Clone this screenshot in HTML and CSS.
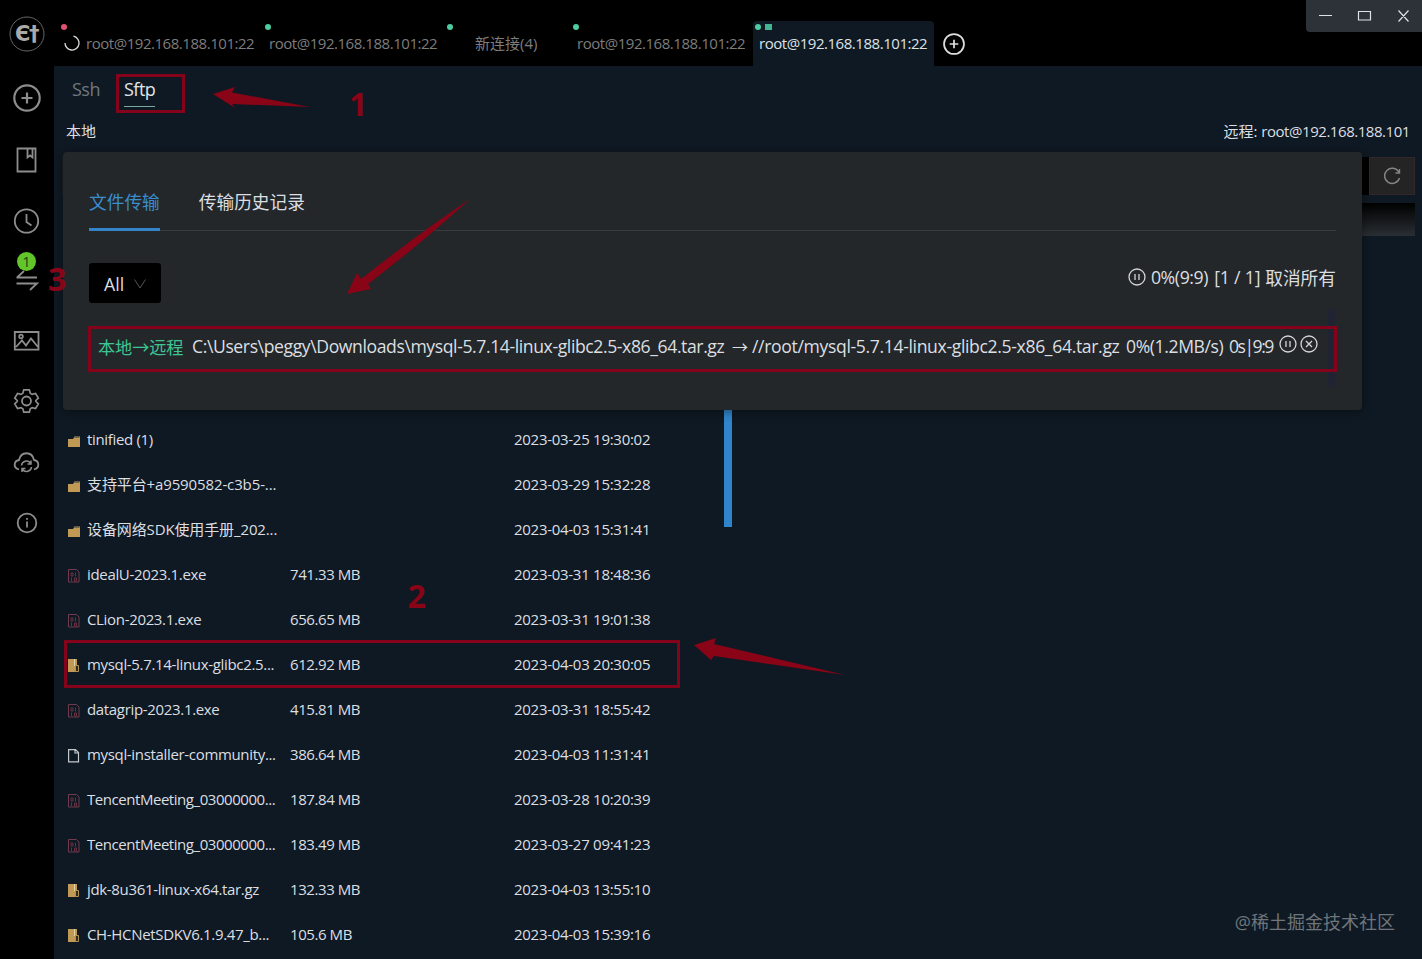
FILE: index.html
```html
<!DOCTYPE html>
<html lang="zh">
<head>
    <meta charset="UTF-8">
    <title>electerm</title>
    <link rel="stylesheet" href="styles.css">
</head>
<body>
<svg class="defs">
    <symbol id="folder" viewBox="0 0 12 12"><path d="M0 4h5l1.500-2.500H12V12H0z" fill="#c09a55"/><path d="M6.500 1h5v1.800H6z" fill="#5e5848"/></symbol>
    <symbol id="exe" viewBox="0 0 12 14"><path d="M.5.5h8l2.500 2.500v10H.5z" fill="none" stroke="#723a4c"/><path d="M3 4h2v3H3zM7.500 3.500v4M3.500 8.500v3.500M6.500 9h2v3h-2z" fill="none" stroke="#6a3143"/></symbol>
    <symbol id="zip" viewBox="0 0 12 14"><path d="M0 0h9v13H0z" fill="#c09a55"/><path d="M6.500 0v7" stroke="#e2d2aa"/><path d="M7.500 6.500h3v6h-3z" fill="#2c2a24" stroke="#b08f52"/></symbol>
    <symbol id="doc" viewBox="0 0 12 14"><path d="M.6.6h6.900l3 3v9.200H.6zM7 .6v3.400h3.500" fill="none" stroke="#c4c8cc" stroke-width="1.200"/></symbol>
    <symbol id="pause" viewBox="0 0 18 18"><circle cx="9" cy="9" r="8"/><path d="M7 6v6M11 6v6"/></symbol>
    <symbol id="plus" viewBox="0 0 28 28"><circle cx="14" cy="14" r="12.700"/><path d="M14 8.500v11M8.500 14h11"/></symbol>
</svg>

<div class="app">
    <div class="sidebar">
        <svg class="logo" viewBox="0 0 36 36"><circle cx="18" cy="18" r="17"/><text x="6" y="25">Є†</text></svg>
        <svg class="icon add" viewBox="0 0 28 28"><use href="#plus"/></svg>
        <svg class="icon book" viewBox="0 0 28 28"><path d="M4.500 2.500h18v23h-18zM14.500 2.500v9l2.500-2 2.500 2v-9"/></svg>
        <svg class="icon clock" viewBox="0 0 28 28"><circle cx="13.500" cy="14" r="11.700"/><path d="M13.500 7v8l5 3.500"/></svg>
        <div class="transfer"><svg class="icon" viewBox="0 0 28 28"><path d="M3.500 12.500h20.500M4 12.500L11 6M3.500 18.500H24L17 25"/></svg><span class="badge">1</span></div>
        <svg class="icon picture" viewBox="0 0 28 28"><path d="M1.800 5h23.700v17.700H1.800zM3 20l6-6.500 4 5 5-7 7 8.500"/><circle cx="8" cy="9.500" r="1.800"/></svg>
        <svg class="icon gear" viewBox="0 0 28 28"><path d="M10.500 2.500h6l1 3.700 2 1.200 3.700-1 3 5-2.700 2.600v1l2.700 2.600-3 5-3.700-1-2 1.200-1 3.700h-6l-1-3.700-2-1.200-3.700 1-3-5L3.500 15v-1L.8 11.400l3-5 3.700 1 2-1.200z" transform="translate(1 .5) scale(.93)"/><circle cx="13.500" cy="14" r="4.500"/></svg>
        <svg class="icon cloud" viewBox="0 0 28 28"><path d="M6 21.500C0 20 .500 13 6 12 8 3 19 3 21 12c5.500 1 6 8 0 9.500"/><path d="M8.500 17.500a5 5 0 0 1 9-2.500M18 12.500V16h-3.500M18.500 19a5 5 0 0 1-9 2.500M9 24v-3.500h3.500" stroke-width="1.500"/></svg>
        <svg class="icon info" viewBox="0 0 28 28"><circle cx="14" cy="14" r="9.300"/><path d="M14 12.500v6M14 9v1.800"/></svg>
    </div>

    <div class="main">
        <div class="tabs">
            <div class="tab t1"><i class="dot red"></i><svg class="spin" viewBox="0 0 16 16"><path d="M9.500 1.200A7 7 0 1 1 1 8"/></svg><span>root@192.168.188.101:22</span></div>
            <div class="tab t2"><i class="dot"></i><span>root@192.168.188.101:22</span></div>
            <div class="tab t3"><i class="dot"></i><span>新连接(4)</span></div>
            <div class="tab t4"><i class="dot"></i><span>root@192.168.188.101:22</span></div>
            <div class="tab t5 active"><i class="dot"></i><i class="square"></i><span>root@192.168.188.101:22</span></div>
            <svg class="new-tab" viewBox="0 0 28 28"><use href="#plus"/></svg>
            <div class="window-control">
                <svg viewBox="0 0 116 32"><path d="M13 15.500h13M52.500 11.500h12v8.500h-12zM92.500 10.500l10 11M102.500 10.500l-10 11"/></svg>
            </div>
        </div>

        <div class="session">
            <div class="pane-tabs"><span class="ssh">Ssh</span><span class="sftp">Sftp</span></div>
            <div class="titles"><span>本地</span><span>远程: <b>root@192.168.188.101</b></span></div>
            <div class="address">
                <div class="path"></div>
                <div class="reload"><svg viewBox="0 0 18 18"><path d="M15.800 5A7.600 7.600 0 1 0 16.500 11M16.500 2v4h-4"/></svg></div>
            </div>
            <div class="list-header"></div>
            <div class="files">
                <div class="list">
                    <div class="row"><svg><use href="#folder"/></svg><span class="name">tinified (1)</span><span class="size"></span><span class="date">2023-03-25 19:30:02</span></div>
                    <div class="row"><svg><use href="#folder"/></svg><span class="name cn">支持平台+a9590582-c3b5-...</span><span class="size"></span><span class="date">2023-03-29 15:32:28</span></div>
                    <div class="row"><svg><use href="#folder"/></svg><span class="name cn">设备网络SDK使用手册_202...</span><span class="size"></span><span class="date">2023-04-03 15:31:41</span></div>
                    <div class="row"><svg><use href="#exe"/></svg><span class="name">idealU-2023.1.exe</span><span class="size">741.33 MB</span><span class="date">2023-03-31 18:48:36</span></div>
                    <div class="row"><svg><use href="#exe"/></svg><span class="name">CLion-2023.1.exe</span><span class="size">656.65 MB</span><span class="date">2023-03-31 19:01:38</span></div>
                    <div class="row"><svg><use href="#zip"/></svg><span class="name">mysql-5.7.14-linux-glibc2.5...</span><span class="size">612.92 MB</span><span class="date">2023-04-03 20:30:05</span></div>
                    <div class="row"><svg><use href="#exe"/></svg><span class="name">datagrip-2023.1.exe</span><span class="size">415.81 MB</span><span class="date">2023-03-31 18:55:42</span></div>
                    <div class="row"><svg><use href="#doc"/></svg><span class="name">mysql-installer-community...</span><span class="size">386.64 MB</span><span class="date">2023-04-03 11:31:41</span></div>
                    <div class="row"><svg><use href="#exe"/></svg><span class="name wide">TencentMeeting_03000000...</span><span class="size">187.84 MB</span><span class="date">2023-03-28 10:20:39</span></div>
                    <div class="row"><svg><use href="#exe"/></svg><span class="name wide">TencentMeeting_03000000...</span><span class="size">183.49 MB</span><span class="date">2023-03-27 09:41:23</span></div>
                    <div class="row"><svg><use href="#zip"/></svg><span class="name">jdk-8u361-linux-x64.tar.gz</span><span class="size">132.33 MB</span><span class="date">2023-04-03 13:55:10</span></div>
                    <div class="row"><svg><use href="#zip"/></svg><span class="name">CH-HCNetSDKV6.1.9.47_b...</span><span class="size">105.6 MB</span><span class="date">2023-04-03 15:39:16</span></div>
                </div>
                <div class="scrollbar"></div>
            </div>
        </div>
    </div>
</div>

<div class="popup">
    <div class="popup-tabs"><span class="current">文件传输</span><span>传输历史记录</span></div>
    <div class="tools">
        <div class="select"><span>All</span><svg viewBox="0 0 12 12"><path d="M.5 1.500L6 10l5.500-8.500"/></svg></div>
        <div class="summary"><svg class="ctl"><use href="#pause"/></svg><span class="percent">0%(9:9)</span><span class="count">[1 / 1]</span><span>取消所有</span></div>
    </div>
    <div class="transfers">
        <span class="direction">本地→远程</span>
        <span class="from">C:\Users\peggy\Downloads\mysql-5.7.14-linux-glibc2.5-x86_64.tar.gz</span>
        <span class="arrow">→</span>
        <span class="to">//root/mysql-5.7.14-linux-glibc2.5-x86_64.tar.gz</span>
        <span class="speed">0%(1.2MB/s)</span>
        <span class="time">0s|9:9</span>
        <svg class="ctl"><use href="#pause"/></svg>
        <svg class="ctl" viewBox="0 0 18 18"><circle cx="9" cy="9" r="8"/><path d="M6 6l6 6M12 6l-6 6"/></svg>
        <div class="track"></div>
    </div>
</div>

<svg class="marks" viewBox="0 0 1422 959">
    <g class="boxes">
        <path d="M117.500 75.500h66v36h-66zM89.500 327.500h1246v43h-1246zM65.500 641.500h613v45h-613z"/>
    </g>
    <path d="M213 94l22-7-3 5.500 78 14.500-78-3 3 4z"/>
    <path d="M347 294l10-21 4 6q57-45 109-80-47 43-102 85l3 5z"/>
    <path d="M694 645l22-7-2 6 131 31-131-19-3 4z"/>
    <text x="349" y="116">1</text>
    <text x="407.500" y="608">2</text>
    <text x="48" y="291">3</text>
</svg>
<div class="watermark">@稀土掘金技术社区</div>
</body>
</html>
```
FILE: styles.css
```css
body {margin: 0; background: #000; color: #dcdfe2; font-family: "Open Sans", "Noto Sans CJK SC", sans-serif; font-size: 15px; overflow: hidden;}
span, b {white-space: nowrap; font-weight: normal;}
svg {fill: none; flex: none;}
.defs {display: none;}
.app {display: flex; width: 1422px; height: 959px; overflow: hidden;}

/* sidebar */
.sidebar {width: 54px; flex: none; display: flex; flex-direction: column; align-items: center; padding-top: 16px; box-sizing: border-box;}
.logo {width: 36px; height: 36px; stroke: #666;}
.logo text {fill: #aaa; stroke: none; font: bold 21px "DejaVu Sans", sans-serif; letter-spacing: -1.5px;}
.icon {width: 28px; height: 28px; stroke: #8d8d8d; stroke-width: 1.8; display: block;}
.add {margin-top: 32px; stroke-width: 2.2;}
.book {margin-top: 34px;}
.clock {margin-top: 33px;}
.transfer {position: relative; margin-top: 30px;}
.badge {position: absolute; left: 4px; top: -13px; width: 19px; height: 19px; border-radius: 50%; background: #62c62b; color: #173b10; font-size: 14px; line-height: 19px; text-align: center;}
.picture {margin-top: 34px;}
.gear {margin-top: 32px;}
.cloud {margin-top: 33px;}
.info {margin-top: 33px;}

/* top tabs */
.main {flex: 1; min-width: 0;}
.tabs {display: flex; height: 66px; box-sizing: border-box; padding-top: 21px; color: #7d7d7d; position: relative;}
.tab {position: relative; height: 45px; line-height: 45px; box-sizing: border-box; padding-left: 6px; border-radius: 4px 4px 0 0; letter-spacing: -.46px;}
.t1 {width: 204px; margin-left: 8px; display: flex; padding-left: 2px;}
.t2 {width: 182px; margin-left: -3px;}
.t3 {width: 126px; padding-left: 30px; letter-spacing: 0;}
.t4 {width: 182px;}
.t5 {width: 181px;}
.active {background: #0f1923; color: #dde2e6;}
.dot, .square {position: absolute; left: 2px; top: 3px; width: 6px; height: 6px; border-radius: 50%; background: #4dcba1;}
.square {left: 12px; width: 7px; border-radius: 0; background: #42b591;}
.red {background: #e0506f; left: -1px;}
.spin {width: 16px; height: 16px; margin: 14px 6px 0 0; stroke: #ddd; stroke-width: 1.3;}
.new-tab {width: 22px; height: 22px; stroke: #ddd; stroke-width: 2.2; margin: 12px 0 0 9px;}
.window-control {position: absolute; right: 0; top: 0; width: 116px; height: 32px; background: #2d3138; border-radius: 0 0 0 4px;}
.window-control svg {display: block; width: 116px; height: 32px; stroke: #dfe2e5; stroke-width: 1.2;}

/* sftp */
.session {background: #0f1923; height: 893px;}
.pane-tabs {display: flex; height: 49px; padding: 9px 0 0 18px; box-sizing: border-box; font-size: 18px; line-height: 29px; color: #70777e; letter-spacing: -.5px;}
.ssh {width: 52px;}
.sftp {color: #e2e5e8; height: 31px; border-bottom: 1px solid #78a99b;}
.titles {display: flex; justify-content: space-between; padding: 0 12px; height: 42px; line-height: 33px;}
.titles b {letter-spacing: -.45px;}
.address {display: flex; height: 38px; margin: 0 7px 8px 8px;}
.path {flex: 1; background: #000; border-left: 1px solid #1d2024;}
.reload {width: 46px; background: #242424; border: 1px solid #30282a; box-sizing: border-box; display: flex; align-items: center; justify-content: center;}
.reload svg {width: 18px; height: 18px; stroke: #858585; stroke-width: 1.4;}
.list-header {height: 33px; margin: 0 7px 0 690px; background: linear-gradient(#000, #2a2f34);}
.files {display: flex; padding: 180px 0 0 14px;}
.list {width: 656px;}
.row {display: grid; grid-template-columns: 19px 203px 224px auto; height: 45px; align-items: center; letter-spacing: -.28px;}
.row svg {width: 12px; height: 14px; margin-top: 4px;}
.row .name {letter-spacing: -.33px;}
.row .cn {letter-spacing: -.12px;}
.row .wide {letter-spacing: -.45px;}
.row .size {letter-spacing: -.42px;}
.scrollbar {width: 8px; height: 117px; background: #3084cb; margin-top: -6px;}

/* transfer popup */
.popup {position: absolute; left: 63px; top: 152px; width: 1299px; height: 258px; box-sizing: border-box; padding: 27px 26px 0; background: #232729; border-radius: 4px; box-shadow: 0 2px 10px rgba(0,0,0,.4); font-size: 17.7px;}
.popup-tabs {display: flex; gap: 39px; height: 52px; border-bottom: 1px solid #373c3f; box-sizing: border-box; line-height: 47px;}
.current {color: #3b8dce; border-bottom: 3px solid #3484c9; height: 49px;}
.tools {display: flex; justify-content: space-between; align-items: center; height: 40px; margin-top: 32px;}
.select {display: flex; align-items: center; gap: 10px; width: 72px; height: 40px; padding: 1px 0 0 15px; box-sizing: border-box; background: #000; border-radius: 3px;}
.select svg {width: 12px; height: 12px; stroke: #555;}
.summary {display: flex; align-items: center; gap: 5px; padding-bottom: 12px;}
.percent {letter-spacing: -.4px; margin-right: 1px;}
.count {letter-spacing: -.2px;}
.ctl {width: 18px; height: 18px; stroke: #d5d5d5; stroke-width: 1.3;}
.transfers {display: flex; align-items: center; position: relative; height: 42px; margin-top: 22px; padding-left: 9px; font-size: 17.6px; letter-spacing: -.4px;}
.direction {width: 94px; color: #3fc595; font-size: 17.2px; letter-spacing: -.1px;}
.from {width: 540px;}
.arrow {width: 20px; font-size: 16px;}
.to {width: 374px; letter-spacing: -.35px;}
.speed {width: 103px;}
.time {width: 50px; letter-spacing: -1.5px;}
.transfers .ctl {margin: -4px 3px 0 0;}
.track {position: absolute; right: 1px; top: -16px; width: 7px; height: 78px; background: #202331;}

/* red marks drawn over the window */
.marks {position: absolute; left: 0; top: 0; width: 1422px; height: 959px; fill: #880416;}
.boxes {fill: none; stroke: #84031a; stroke-width: 3;}
.marks text {font: bold 32px "Open Sans", sans-serif;}
.watermark {position: absolute; right: 27px; top: 909px; line-height: 26px; color: #6e757b; font-size: 18px; white-space: nowrap;}
```
